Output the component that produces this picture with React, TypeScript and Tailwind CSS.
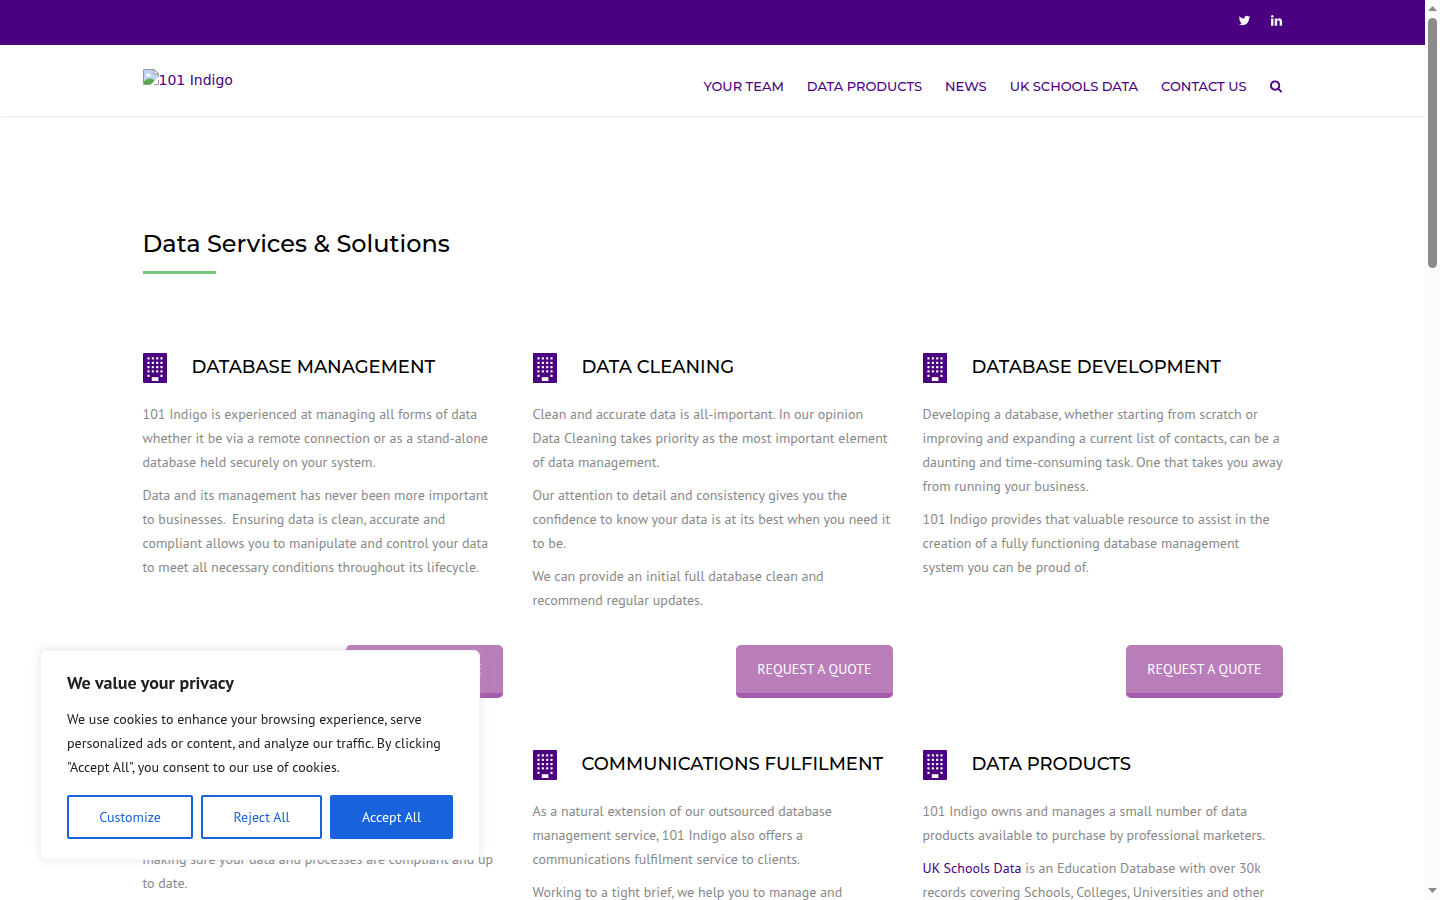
import React from "react";

type Service = { title: string; paragraphs: React.ReactNode[]; quote?: boolean };

const services: Service[] = [
  {
    title: "DATABASE MANAGEMENT",
    paragraphs: [
      "101 Indigo is experienced at managing all forms of data\nwhether it be via a remote connection or as a stand-alone\ndatabase held securely on your system.",
      "Data and its management has never been more important\nto businesses.\u00a0 Ensuring data is clean, accurate and\ncompliant allows you to manipulate and control your data\nto meet all necessary conditions throughout its lifecycle.",
    ],
    quote: true,
  },
  {
    title: "DATA CLEANING",
    paragraphs: [
      "Clean and accurate data is all-important. In our opinion\nData Cleaning takes priority as the most important element\nof data management.",
      "Our attention to detail and consistency gives you the\nconfidence to know your data is at its best when you need it\nto be.",
      "We can provide an initial full database clean and\nrecommend regular updates.",
    ],
    quote: true,
  },
  {
    title: "DATABASE DEVELOPMENT",
    paragraphs: [
      "Developing a database, whether starting from scratch or\nimproving and expanding a current list of contacts, can be a\ndaunting and time-consuming task. One that takes you away\nfrom running your business.",
      "101 Indigo provides that valuable resource to assist in the\ncreation of a fully functioning database management\nsystem you can be proud of.",
    ],
    quote: true,
  },
  {
    title: "DATA COMPLIANCE",
    paragraphs: [
      "101 Indigo can review the data you hold\nand the way in which it is used,\nmaking sure your data and processes are compliant and up\nto date.",
    ],
  },
  {
    title: "COMMUNICATIONS FULFILMENT",
    paragraphs: [
      "As a natural extension of our outsourced database\nmanagement service, 101 Indigo also offers a\ncommunications fulfilment service to clients.",
      "Working to a tight brief, we help you to manage and",
    ],
  },
  {
    title: "DATA PRODUCTS",
    paragraphs: [
      "101 Indigo owns and manages a small number of data\nproducts available to purchase by professional marketers.",
      <>
        <a href="#uk-schools-data" className="text-[#4b0082]">UK Schools Data</a>
        {" is an Education Database with over 30k\nrecords covering Schools, Colleges, Universities and other"}
      </>,
    ],
  },
];

const navItems = ["YOUR TEAM", "DATA PRODUCTS", "NEWS", "UK SCHOOLS DATA", "CONTACT US"];

function TwitterIcon() {
  return (
    <svg viewBox="0 0 1792 1792" className="size-[13px] fill-current" aria-hidden="true">
      <path d="M1684 408q-67 98-162 167 1 14 1 42 0 130-38 259.5t-115.5 248.5-184.5 210.5-258 146-323 54.5q-271 0-496-145 35 4 78 4 225 0 401-138-105-2-188-64.5t-114-159.5q33 5 61 5 43 0 85-11-112-23-185.5-111.5t-73.5-205.5v-4q68 38 146 41-66-44-105-115t-39-154q0-88 44-163 121 149 294.5 238.5t371.5 99.5q-8-38-8-74 0-134 94.5-228.5t228.5-94.5q140 0 236 102 109-21 205-78-37 115-142 178 93-10 186-50z" />
    </svg>
  );
}

function LinkedinIcon() {
  return (
    <svg viewBox="0 0 1792 1792" className="size-[13px] fill-current" aria-hidden="true">
      <path d="M477 625v991h-330v-991h330zm21-306q1 73-50.5 122t-135.5 49h-2q-82 0-132-49t-50-122q0-74 51.5-122.5t134.5-48.5 133 48.5 51 122.5zm1166 729v568h-329v-530q0-105-40.5-164.5t-126.5-59.5q-63 0-105.5 34.5t-63.5 85.5q-11 30-11 81v553h-329q2-399 2-647t-1-296l-1-48h329v144h-2q20-32 41-56t56.5-52 87-43.5 114.5-15.5q171 0 275 113.5t104 332.5z" />
    </svg>
  );
}

function SearchIcon() {
  return (
    <svg viewBox="0 64 1792 1792" className="size-[13px] fill-current" aria-hidden="true">
      <path d="M1152 832q0-185-131.5-316.5t-316.5-131.5-316.5 131.5-131.5 316.5 131.5 316.5 316.5 131.5 316.5-131.5 131.5-316.5zm512 832q0 52-38 90t-90 38q-54 0-90-38l-343-342q-179 124-399 124-143 0-273.5-55.5t-225-150-150-225-55.5-273.5 55.5-273.5 150-225 225-150 273.5-55.5 273.5 55.5 225 150 150 225 55.5 273.5q0 220-124 399l343 343q37 37 37 90z" />
    </svg>
  );
}

function MissingImageIcon() {
  return (
    <svg viewBox="0 0 16 16" className="size-4" aria-hidden="true">
      <path d="M.5 .5H11L15.5 5V8L8 15.5H.5Z" fill="#c0d3f2" />
      <path d="M1 15V12.500C3 10.500 5 9.500 7 9.500 9 9.500 10.500 10.500 11.500 11.500L8 15.500H1Z" fill="#55a845" />
      <path d="M3 6.500C3 4.500 6 4 6.500 5.500 8 5 8.500 7 7.500 7.500H3.500Z" fill="#fff" />
      <path d="M15.500 8.500V5L11 .5H.5V15.500H7.500M15.500 11V15.500H11" fill="none" stroke="#989898" />
      <path d="M11 .5V5H15.500Z" fill="#fff" stroke="#989898" />
      <path d="M16 7.500 7.500 16H10.500L16 10.500Z" fill="#fff" />
    </svg>
  );
}

function BuildingIcon() {
  return (
    <svg viewBox="0 0 24 30" className="h-[30px] w-6 shrink-0" aria-hidden="true">
      <rect width="24" height="30" rx="1" fill="#4b0082" />
      {[4.4, 8.8, 13.1, 17.4].map((x) =>
        [4.3, 8.7, 13, 17.3, 21.7].map((y) =>
          y > 20 && x > 5 && x < 17 ? null : (
            <rect key={`${x}-${y}`} x={x} y={y} width="2.2" height="2.2" rx="0.4" fill="#fff" />
          ),
        ),
      )}
      <rect x="8.800" y="24.200" width="6.600" height="3.800" fill="#fff" />
    </svg>
  );
}

function ServiceCard({ title, paragraphs, quote }: Service) {
  return (
    <article className="flex flex-col">
      <div className="flex h-[30px] items-start gap-[25px]">
        <BuildingIcon />
        <h3 className="whitespace-nowrap font-['Montserrat','Inter',sans-serif] text-[18px] leading-7 font-medium text-black">
          {title}
        </h3>
      </div>
      <div className="mt-[19px] flex flex-col gap-[9px] whitespace-pre text-[14px] leading-6 text-[#888]">
        {paragraphs.map((p, i) => (
          <p key={i}>{p}</p>
        ))}
      </div>
      {quote && (
        <div className="mt-auto flex justify-end pt-[33px]">
          <button
            type="button"
            className="h-[53px] rounded-[5px] border-b-[5px] border-[#a65aae] bg-[#b97dba] px-[21px] text-[14px] text-white"
          >
            REQUEST A QUOTE
          </button>
        </div>
      )}
    </article>
  );
}

function CookieNotice() {
  return (
    <section
      aria-label="Cookie consent"
      className="fixed bottom-10 left-10 w-[440px] rounded-md border border-[#f4f4f4] bg-white px-[26px] pt-5 pb-5 text-[#212121] shadow-[0_-1px_10px_rgba(172,171,171,0.3)]"
    >
      <h2 className="text-[18px] leading-6 font-bold">We value your privacy</h2>
      <p className="mt-3 text-[14px] leading-6 whitespace-pre">
        {
          'We use cookies to enhance your browsing experience, serve\npersonalized ads or content, and analyze our traffic. By clicking\n"Accept All", you consent to our use of cookies.'
        }
      </p>
      <div className="mt-4 grid grid-cols-[126fr_121fr_123fr] gap-2 text-[14px]">
        <button type="button" className="h-11 rounded-xs border-2 border-[#1863dc] text-[#1863dc]">
          Customize
        </button>
        <button type="button" className="h-11 rounded-xs border-2 border-[#1863dc] text-[#1863dc]">
          Reject All
        </button>
        <button type="button" className="h-11 rounded-xs border-2 border-[#1863dc] bg-[#1863dc] text-white">
          Accept All
        </button>
      </div>
    </section>
  );
}

function PageScrollbar() {
  return (
    <div className="flex w-[15px] shrink-0 flex-col items-center bg-[#fcfcfc] pt-1.5 pb-[7px]" aria-hidden="true">
      <svg viewBox="0 0 9 5" className="h-[5px] w-[9px]">
        <path d="M0 5 4.500 0 9 5Z" fill="#8b8b8b" />
      </svg>
      <div className="mt-[7px] h-[250px] w-[9px] rounded-full bg-[#8b8b8b]" />
      <svg viewBox="0 0 9 5" className="mt-auto h-[5px] w-[9px]">
        <path d="M0 0 4.500 5 9 0Z" fill="#8b8b8b" />
      </svg>
    </div>
  );
}

export default function App() {
  return (
    <div className="flex h-screen overflow-hidden bg-white font-['PT_Sans','Noto_Sans',sans-serif]">
      <div className="min-w-0 flex-1 overflow-hidden">
        <div className="h-[45px] bg-[#4b0082]">
          <div className="mx-auto flex max-w-[1140px] justify-end gap-[19px] pt-3.5 text-white">
            <a href="#twitter" aria-label="Twitter"><TwitterIcon /></a>
            <a href="#linkedin" aria-label="LinkedIn"><LinkedinIcon /></a>
          </div>
        </div>
        <header className="h-[71px] shadow-[0_1px_2px_rgba(0,0,0,0.1)]">
          <div className="mx-auto flex max-w-[1140px] justify-between text-[#4b0082]">
            <a
              href="#home"
              className="mt-6 flex h-[22px] items-start font-['DejaVu_Sans',sans-serif] text-[14px] leading-[22px]"
            >
              <MissingImageIcon />
              101 Indigo
            </a>
            <nav className="mt-[31px] flex h-5 items-center gap-[23px] font-['Montserrat','Inter',sans-serif] text-[13px] leading-5 font-medium">
              {navItems.map((item) => (
                <a key={item} href={`#${item.toLowerCase().replaceAll(" ", "-")}`}>{item}</a>
              ))}
              <button type="button" aria-label="Search"><SearchIcon /></button>
            </nav>
          </div>
        </header>
        <main className="mx-auto max-w-[1140px] pt-[110px]">
          <h1 className="font-['Montserrat','Inter',sans-serif] text-[24px] leading-9 font-medium text-black">
            Data Services &amp; Solutions
          </h1>
          <div className="mt-[9px] h-[3px] w-[73px] bg-[#73c67b]" />
          <div className="mt-[79px] grid grid-cols-3 gap-x-[30px] gap-y-[52px]">
            {services.map((service) => (
              <ServiceCard key={service.title} {...service} />
            ))}
          </div>
        </main>
      </div>
      <PageScrollbar />
      <CookieNotice />
    </div>
  );
}
